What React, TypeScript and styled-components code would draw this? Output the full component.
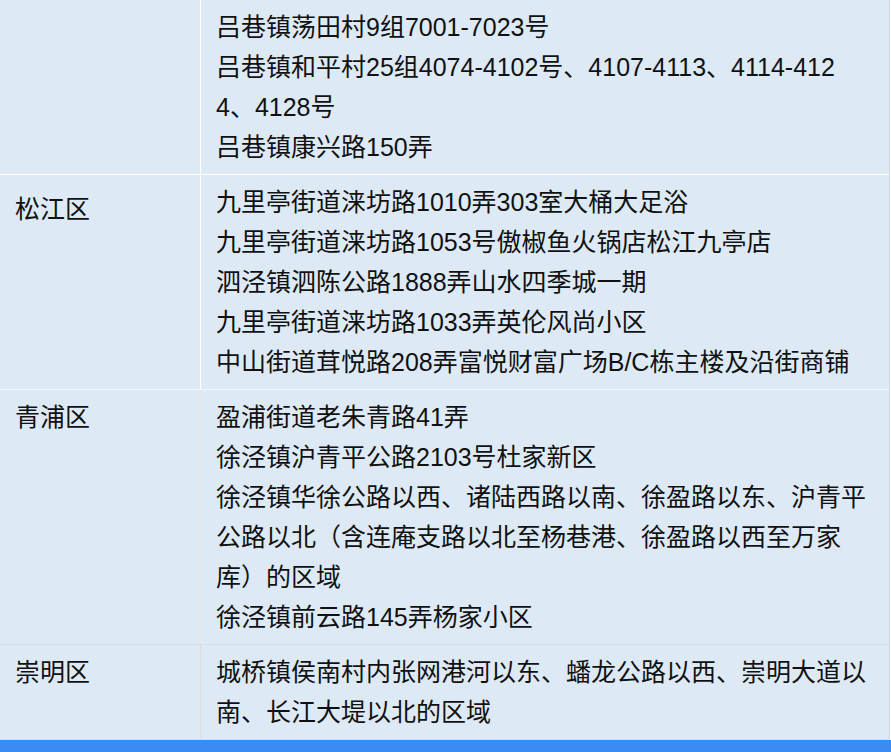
import styled, { createGlobalStyle } from "styled-components";

const GlobalStyle = createGlobalStyle`
  html, body {
    margin: 0;
    padding: 0;
    background: #ffffff;
  }
  body {
    font-family: "Liberation Sans", "Noto Sans CJK SC", sans-serif;
  }
`;

type Row = {
  district: string;
  lines: string[];
  topLine: string;
  sideLine: string;
  labelOffset?: number;
};

const rows: Row[] = [
  {
    district: "",
    topLine: "#ffffff",
    sideLine: "#ffffff",
    lines: [
      "吕巷镇荡田村9组7001-7023号",
      "吕巷镇和平村25组4074-4102号、4107-4113、4114-4124、4128号",
      "吕巷镇康兴路150弄",
    ],
  },
  {
    district: "松江区",
    topLine: "#ffffff",
    sideLine: "#ffffff",
    labelOffset: 7,
    lines: [
      "九里亭街道涞坊路1010弄303室大桶大足浴",
      "九里亭街道涞坊路1053号傲椒鱼火锅店松江九亭店",
      "泗泾镇泗陈公路1888弄山水四季城一期",
      "九里亭街道涞坊路1033弄英伦风尚小区",
      "中山街道茸悦路208弄富悦财富广场B/C栋主楼及沿街商铺",
    ],
  },
  {
    district: "青浦区",
    topLine: "#f4f8fb",
    sideLine: "#e2e6ea",
    lines: [
      "盈浦街道老朱青路41弄",
      "徐泾镇沪青平公路2103号杜家新区",
      "徐泾镇华徐公路以西、诸陆西路以南、徐盈路以东、沪青平公路以北（含连庵支路以北至杨巷港、徐盈路以西至万家库）的区域",
      "徐泾镇前云路145弄杨家小区",
    ],
  },
  {
    district: "崇明区",
    topLine: "#d9dde1",
    sideLine: "#d9dde1",
    lines: ["城桥镇侯南村内张网港河以东、蟠龙公路以西、崇明大道以南、长江大堤以北的区域"],
  },
];

const App = () => {
  return (
    <>
      <GlobalStyle />
      <S.Page>
        <S.Table>
          {rows.map((row, i) => (
            <S.Row key={i} $line={row.topLine}>
              <S.District $line={row.sideLine} $offset={row.labelOffset ?? 0}>
                {row.district}
              </S.District>
              <S.Areas>
                {row.lines.map((line) => (
                  <p key={line}>{line}</p>
                ))}
              </S.Areas>
            </S.Row>
          ))}
        </S.Table>
        <S.BottomBar />
      </S.Page>
    </>
  );
};

export default App;

const S = {
  Page: styled.div`
    width: 891px;
    height: 752px;
    overflow: hidden;
    display: flex;
    flex-direction: column;
  `,
  Table: styled.div`
    width: 889px;
    margin-top: -1px;
    display: flex;
    flex-direction: column;
    background-color: #ddeaf6;
    border-right: 1px solid #d4d9de;
  `,
  Row: styled.div<{ $line: string }>`
    display: grid;
    grid-template-columns: 201px 1fr;
    border-top: 1px solid ${({ $line }) => $line};
    &:last-child {
      border-bottom: 1px solid #d9dde1;
    }
  `,
  District: styled.div<{ $line: string; $offset: number }>`
    padding: ${({ $offset }) => 7 + $offset}px 15px 7px 15px;
    border-right: 1px solid ${({ $line }) => $line};
    font-size: 25px;
    line-height: 40px;
    color: #111111;
  `,
  Areas: styled.div`
    padding: 7px 19px 7px 15px;
    font-size: 25px;
    line-height: 40px;
    color: #111111;
    word-break: break-all;

    p {
      margin: 0;
    }
  `,
  BottomBar: styled.div`
    flex: 1;
    background-color: #3b8cf0;
  `,
};
